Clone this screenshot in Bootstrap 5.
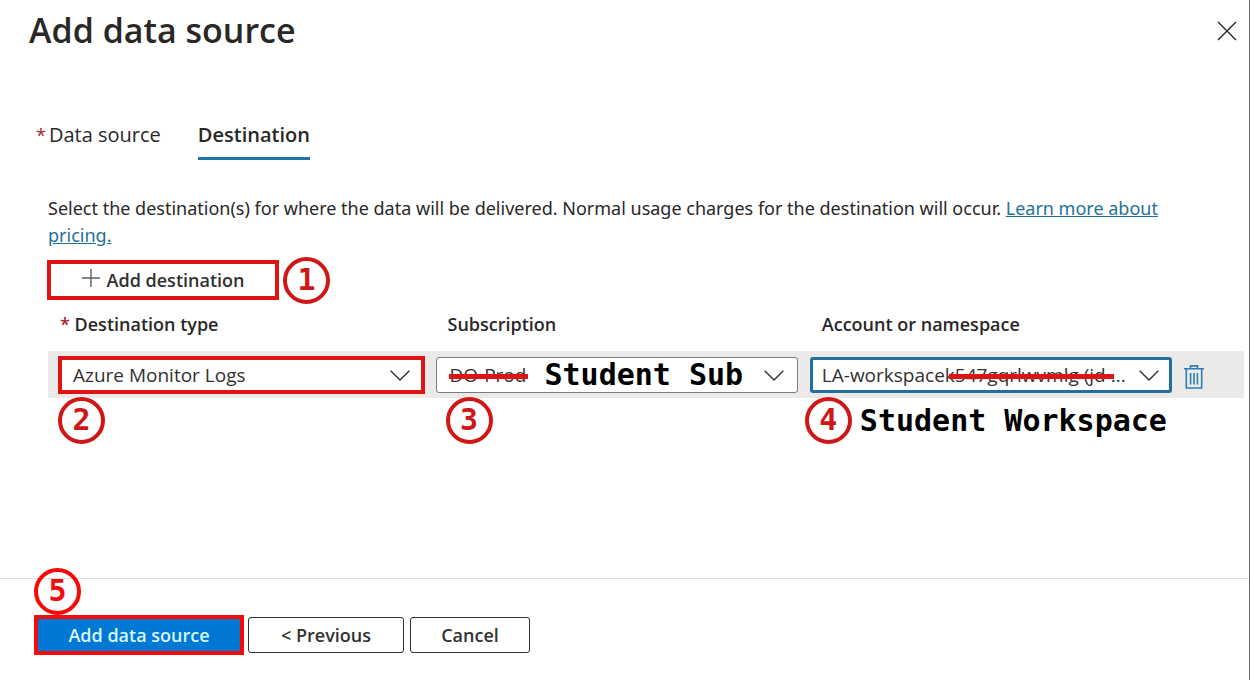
<!DOCTYPE html>
<html lang="en">
<head>
<meta charset="utf-8">
<meta name="viewport" content="width=device-width, initial-scale=1">
<title>Add data source</title>
<link href="https://cdn.jsdelivr.net/npm/bootstrap@5.3.0/dist/css/bootstrap.min.css" rel="stylesheet">
<style>
  body { font-family: "Open Sans", "Noto Sans", sans-serif; font-size: 18px; line-height: 27px; color: #292827; background: #fff; }
  .panel { border-right: 1px solid #6b6b6b; }
  .panel-head { padding: 6px 12px 0 29px; }
  .panel-title { font-size: 34px; line-height: 48px; font-weight: 600; }
  .close-btn { padding: 9px 0; color: #292827; line-height: 0; }
  .panel-body { padding: 64px 5px 0 48px; }
  .tabs { gap: 37px; }
  .tabs .nav-link { padding: 0 0 7px; font-size: 20px; line-height: 30px; color: #292827; border-bottom: 3px solid transparent; }
  .tabs .nav-link.active { font-weight: 600; border-color: #1b75a5; }
  .req { color: #a4262c; }
  .tabs .req { margin-left: -12px; padding-right: 3px; font-size: 18px; }
  .intro { margin: 35px 48px 0 0; font-family: "Noto Sans", "Open Sans", sans-serif; }
  .intro a { color: #1f7199; }
  .add-row { height: 40px; margin: 11px 0 0 -1px; }
  .marked { outline: 4px solid #dc1414; outline-offset: -4px; }
  .btn-add { width: 232px; height: 40px; padding: 0; gap: 7px; color: #323130; font-size: 18px; line-height: 26px; font-weight: 600; border: 0; border-radius: 0; }
  .step { width: 47px; height: 47px; border: 4px solid #cf1717; border-radius: 50%; color: #cf1717; font: 700 30px/37px "DejaVu Sans Mono", monospace; text-align: center; flex: none; }
  .note { font: 700 30px/38px "DejaVu Sans Mono", monospace; color: #000; white-space: nowrap; }
  .dest { table-layout: fixed; width: 100%; margin-top: 4px; }
  .dest th { padding: 7px 12px 13px; font-size: 18px; font-weight: 600; }
  .dest td { position: relative; padding: 6px 12px 5px 0; background: #ebeae9; }
  .dest td:first-child { padding-left: 11px; }
  .dest .form-select { height: 36px; padding: 0 42px 0 13px; font-size: 19px; line-height: 34px; color: #323130; border: 1px solid #7b7a79; border-radius: 3px;
    background: #fff url("data:image/svg+xml,%3Csvg xmlns='http://www.w3.org/2000/svg' width='20' height='11' fill='none' stroke='%23323130' stroke-width='1.4'%3E%3Cpath d='M.7.7 10 10 19.3.7'/%3E%3C/svg%3E") no-repeat right 13px center; background-size: 20px 11px; }
  .dest .form-select.current { border: 3px solid #1f6f9f; padding-left: 9px; line-height: 30px; background-position: right 10px center; }
  .dest .form-select.marked { outline-offset: -3px; border-color: #dc1414; border-radius: 0; }
  .strike { position: absolute; height: 5px; background: #dc1414; top: 23px; }
  .strike-sub { left: 13px; width: 79px; }
  .strike-account { left: 139px; width: 165px; }
  .sub-note { position: absolute; left: 109px; top: 5px; pointer-events: none; }
  .below { position: absolute; top: 46px; left: 10px; gap: 8px; }
  .below.account { left: -5px; }
  .trash-btn { padding: 0; line-height: 0; vertical-align: middle; }
  .trash-btn svg { display: block; }
  .panel-foot { position: relative; padding: 36px 34px 25px; border-top: 1px solid #dcdcdc; }
  .panel-foot .btn { height: 36px; padding: 0; font-size: 18px; line-height: 32px; font-weight: 600; color: #323130; border: 1px solid #323130; border-radius: 3px; }
  .panel-foot .btn-main { width: 210px; height: 40px; line-height: 30px; background: #0078d4; color: #d8f6ff; border: 4px solid #f50a0a; border-radius: 0; }
  .prev { width: 156px; margin-right: 6px; }
  .cancel { width: 120px; }
  .step-five { position: absolute; left: 34px; top: -11px; color: #f50a0a; border-color: #f50a0a; }
</style>
</head>
<body>
<div class="panel min-vh-100 d-flex flex-column">
  <header class="panel-head d-flex justify-content-between align-items-start">
    <h1 class="panel-title m-0">Add data source</h1>
    <button type="button" class="btn close-btn border-0" aria-label="Close">
      <svg width="20" height="32" viewBox="0 0 20 32" fill="none" stroke="currentColor" stroke-width="1.4"><path d="M1 7l18 18M19 7L1 25"/></svg>
    </button>
  </header>

  <main class="panel-body flex-grow-1">
    <nav class="nav tabs">
      <a class="nav-link" href="#source"><span class="req">*</span>Data source</a>
      <a class="nav-link active" href="#destination" aria-current="page">Destination</a>
    </nav>

    <p class="intro">Select the destination(s) for where the data will be delivered. Normal usage charges for the destination will occur. <a href="#pricing">Learn more about pricing.</a></p>

    <div class="add-row d-flex align-items-center gap-1">
      <button type="button" class="btn btn-add marked d-flex align-items-center justify-content-center">
        <svg width="18" height="22" viewBox="0 0 18 22" fill="none" stroke="#605e5c" stroke-width="1.4"><path d="M9 0v18M0 9h18"/></svg>
        Add destination
      </button>
      <span class="step">1</span>
    </div>

    <table class="dest">
      <colgroup><col style="width:32.4%"><col style="width:31.3%"><col style="width:31.3%"><col></colgroup>
      <thead>
        <tr>
          <th scope="col"><label for="type"><span class="req">*</span> Destination type</label></th>
          <th scope="col"><label for="sub">Subscription</label></th>
          <th scope="col"><label for="account">Account or namespace</label></th>
          <th></th>
        </tr>
      </thead>
      <tbody>
        <tr>
          <td>
            <select id="type" class="form-select marked"><option>Azure Monitor Logs</option></select>
            <div class="below d-flex"><span class="step">2</span></div>
          </td>
          <td>
            <select id="sub" class="form-select"><option>DO-Prod</option></select>
            <span class="strike strike-sub"></span>
            <span class="note sub-note">Student Sub</span>
            <div class="below d-flex"><span class="step">3</span></div>
          </td>
          <td>
            <select id="account" class="form-select current"><option>LA-workspacek547gqrlwvmlg (jd ...</option></select>
            <span class="strike strike-account"></span>
            <div class="below account d-flex align-items-center"><span class="step">4</span><span class="note">Student Workspace</span></div>
          </td>
          <td>
            <button type="button" class="btn trash-btn border-0" aria-label="Delete">
              <svg width="20" height="24" viewBox="0 0 20 24" fill="none" stroke="#2e7fb4" stroke-width="1.6"><path d="M0 3.800h20M6.500 3.500V.9h7v2.600M2.300 4v19h15.400V4M6.600 8v11.500M10 8v11.500M13.400 8v11.500"/></svg>
            </button>
          </td>
        </tr>
      </tbody>
    </table>
  </main>

  <footer class="panel-foot d-flex align-items-center">
    <span class="step step-five">5</span>
    <button type="button" class="btn btn-main me-1">Add data source</button>
    <button type="button" class="btn prev">&lt; Previous</button>
    <button type="button" class="btn cancel">Cancel</button>
  </footer>
</div>
<script src="https://cdn.jsdelivr.net/npm/bootstrap@5.3.0/dist/js/bootstrap.bundle.min.js"></script>
</body>
</html>
